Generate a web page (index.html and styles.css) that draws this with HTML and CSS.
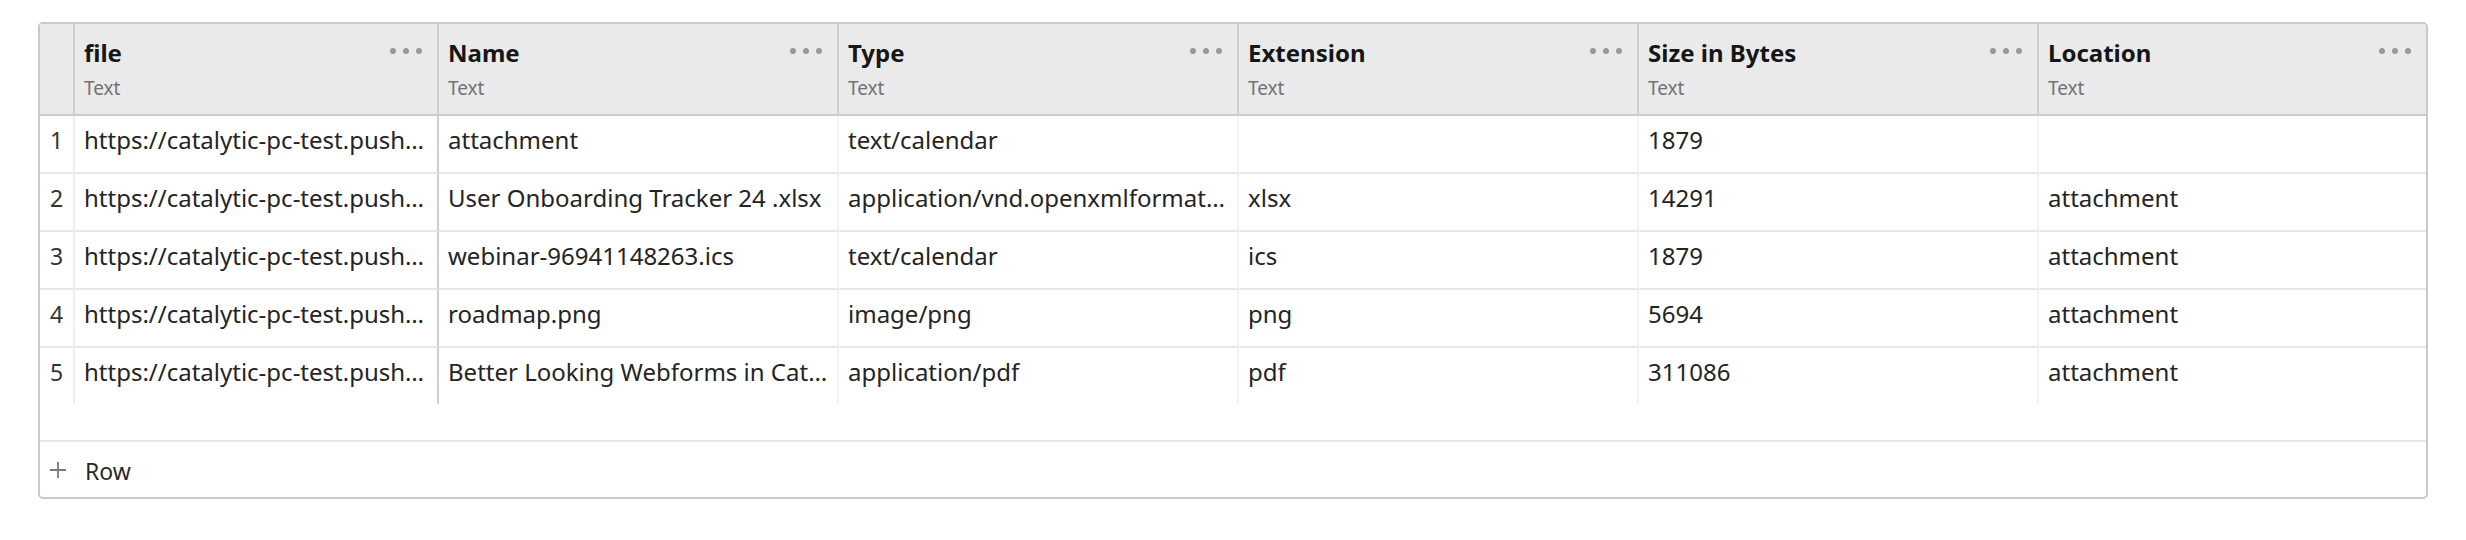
FILE: index.html
```html
<!DOCTYPE html>
<html lang="en">
<head>
<meta charset="utf-8">
<title>Files table</title>
<link rel="stylesheet" href="styles.css">
</head>
<body>
<div class="table">
  <div class="grid">
    <div class="hcell num"></div>
    <div class="hcell">
      <div class="htop"><span class="title">file</span><span class="dots"><i></i><i></i><i></i></span></div>
      <div class="sub">Text</div>
    </div>
    <div class="hcell">
      <div class="htop"><span class="title">Name</span><span class="dots"><i></i><i></i><i></i></span></div>
      <div class="sub">Text</div>
    </div>
    <div class="hcell">
      <div class="htop"><span class="title">Type</span><span class="dots"><i></i><i></i><i></i></span></div>
      <div class="sub">Text</div>
    </div>
    <div class="hcell">
      <div class="htop"><span class="title">Extension</span><span class="dots"><i></i><i></i><i></i></span></div>
      <div class="sub">Text</div>
    </div>
    <div class="hcell">
      <div class="htop"><span class="title">Size in Bytes</span><span class="dots"><i></i><i></i><i></i></span></div>
      <div class="sub">Text</div>
    </div>
    <div class="hcell last">
      <div class="htop"><span class="title">Location</span><span class="dots"><i></i><i></i><i></i></span></div>
      <div class="sub">Text</div>
    </div>

    <div class="cell num">1</div>
    <div class="cell file">https://catalytic-pc-test.pushbotstorage.com/files/attachment</div>
    <div class="cell">attachment</div>
    <div class="cell">text/calendar</div>
    <div class="cell"></div>
    <div class="cell">1879</div>
    <div class="cell last"></div>

    <div class="cell num">2</div>
    <div class="cell file">https://catalytic-pc-test.pushbotstorage.com/files/tracker</div>
    <div class="cell">User Onboarding Tracker 24 .xlsx</div>
    <div class="cell">application/vnd.openxmlformats-officedocument.spreadsheetml.sheet</div>
    <div class="cell">xlsx</div>
    <div class="cell">14291</div>
    <div class="cell last">attachment</div>

    <div class="cell num">3</div>
    <div class="cell file">https://catalytic-pc-test.pushbotstorage.com/files/webinar</div>
    <div class="cell">webinar-96941148263.ics</div>
    <div class="cell">text/calendar</div>
    <div class="cell">ics</div>
    <div class="cell">1879</div>
    <div class="cell last">attachment</div>

    <div class="cell num">4</div>
    <div class="cell file">https://catalytic-pc-test.pushbotstorage.com/files/roadmap</div>
    <div class="cell">roadmap.png</div>
    <div class="cell">image/png</div>
    <div class="cell">png</div>
    <div class="cell">5694</div>
    <div class="cell last">attachment</div>

    <div class="cell num">5</div>
    <div class="cell file">https://catalytic-pc-test.pushbotstorage.com/files/webforms</div>
    <div class="cell">Better Looking Webforms in Catalytic.pdf</div>
    <div class="cell">application/pdf</div>
    <div class="cell">pdf</div>
    <div class="cell">311086</div>
    <div class="cell last">attachment</div>
  </div>
  <div class="spacer"></div>
  <div class="footer">
    <svg class="plus" width="18" height="18" viewBox="0 0 18 18"><path d="M9 1V17M1 9H17" stroke="#7a7a7a" stroke-width="1.8" fill="none"/></svg>
    <span class="addrow">Row</span>
  </div>
</div>
</body>
</html>
```

FILE: styles.css
```css
html, body {
  margin: 0;
  background: #ffffff;
}
body {
  padding: 22px 38px 0 38px;
  font-family: "Noto Sans", "Open Sans", sans-serif;
  color: #242424;
}
.table {
  width: 2390px;
  box-sizing: border-box;
  border: 2px solid #c9c9c9;
  border-radius: 5px;
  overflow: hidden;
  background: #ffffff;
}
.grid {
  display: grid;
  grid-template-columns: 35px 364px 400px 400px 400px 400px 1fr;
}
.hcell {
  height: 92px;
  box-sizing: border-box;
  background: #eaeaea;
  border-right: 2px solid #cfcfcf;
  border-bottom: 2px solid #cccccc;
  padding: 14px 15px 0 9px;
  display: flex;
  flex-direction: column;
  min-width: 0;
}
.hcell.last { border-right: none; }
.htop {
  display: flex;
  justify-content: space-between;
  align-items: flex-start;
}
.title {
  font-weight: 700;
  font-size: 24px;
  line-height: 30px;
  color: #161616;
  white-space: nowrap;
}
.dots {
  display: flex;
  gap: 7px;
  margin-top: 10px;
}
.dots i {
  display: block;
  width: 6px;
  height: 6px;
  border-radius: 50%;
  background: #999999;
}
.sub {
  margin-top: 8px;
  font-size: 19px;
  line-height: 24px;
  color: #727272;
}
.cell {
  height: 58px;
  box-sizing: border-box;
  border-right: 2px solid #f3f3f3;
  border-bottom: 2px solid #e8e8e8;
  padding: 8px 9px 0 9px;
  font-size: 24px;
  line-height: 32px;
  white-space: nowrap;
  overflow: hidden;
  text-overflow: ellipsis;
  min-width: 0;
}
.cell.last { border-right: none; }
.cell.file { border-right-color: #cfcfcf; }
.cell.num {
  padding: 8px 0 0 0;
  text-align: center;
  font-size: 23px;
  color: #333333;
  border-right-color: #efefef;
}
.hcell.num { padding: 0; }
.grid > .cell:nth-last-child(-n+7) { border-bottom: none; height: 56px; }
.spacer {
  height: 36px;
  border-bottom: 2px solid #e8e8e8;
}
.footer {
  height: 55px;
  box-sizing: border-box;
  display: flex;
  align-items: center;
  padding: 0 0 0 9px;
}
.plus {
  display: block;
  margin-right: 18px;
}
.addrow {
  font-size: 23px;
  line-height: 30px;
  color: #2a2a2a;
  margin-top: 2px;
}
```
